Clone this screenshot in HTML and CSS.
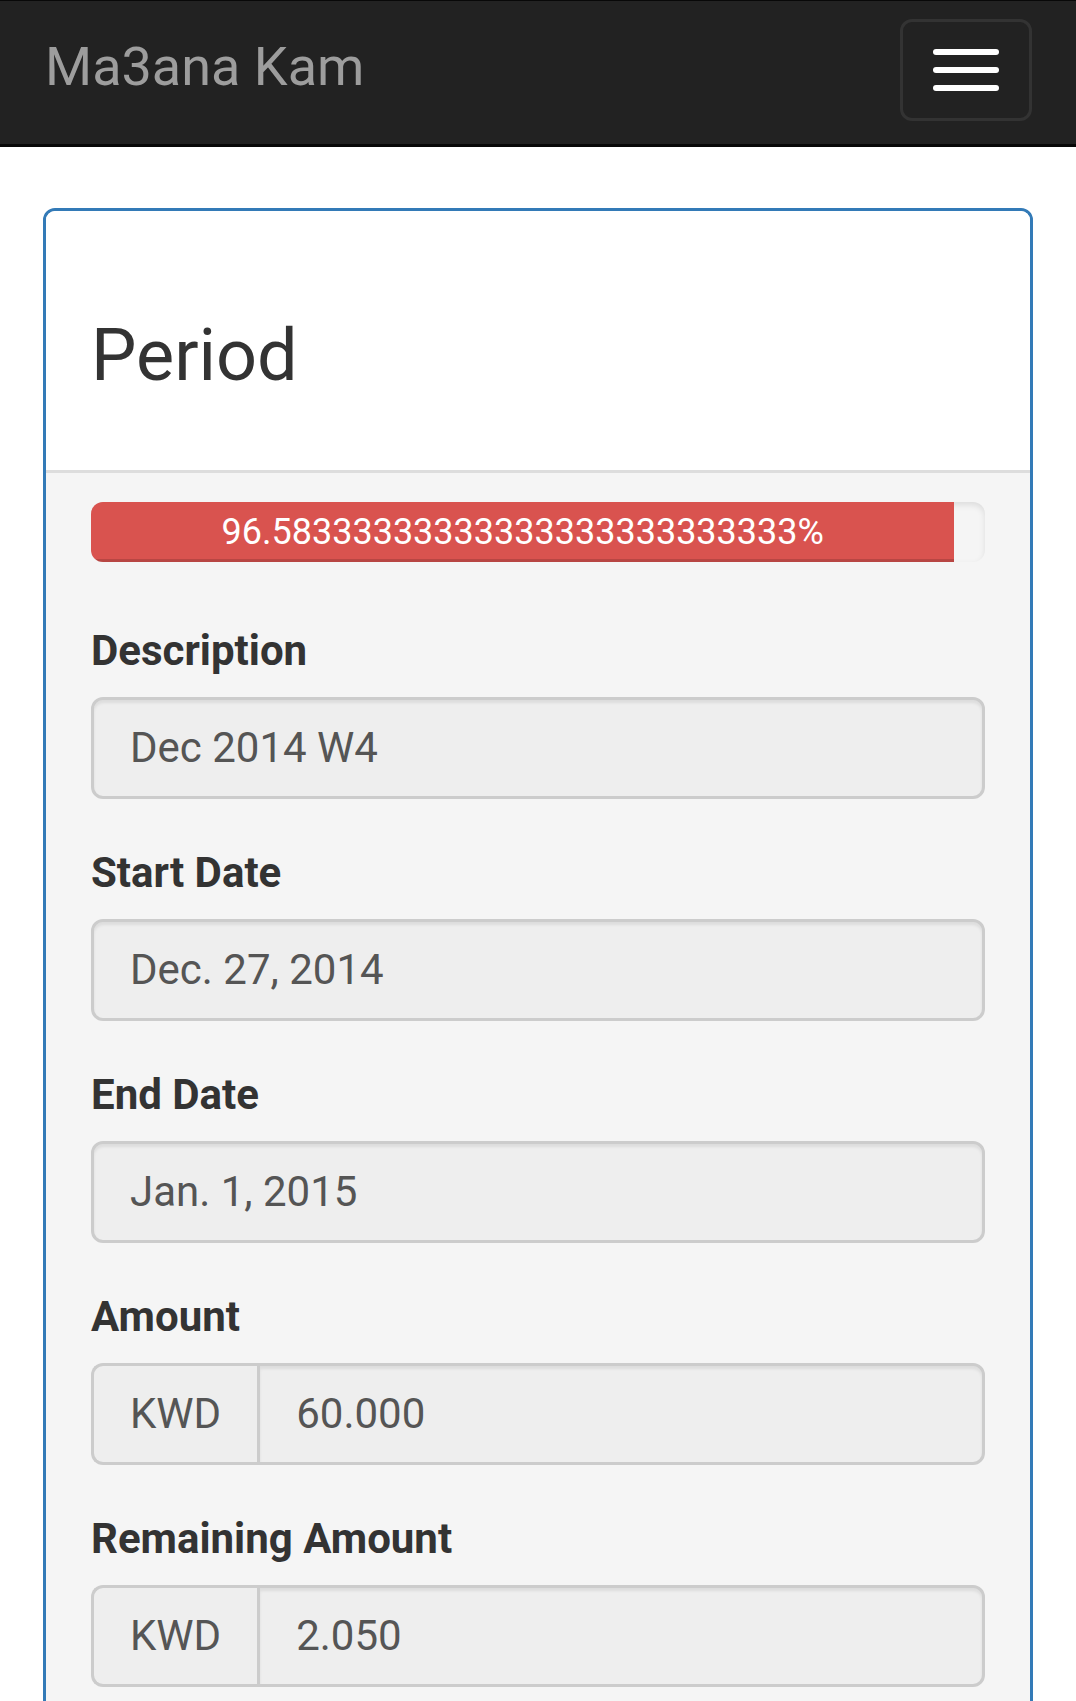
FILE: index.html
```html
<!DOCTYPE html>
<html lang="en">
<head>
<meta charset="utf-8">
<title>Ma3ana Kam</title>
<link rel="stylesheet" href="styles.css">
</head>
<body>
<nav class="navbar">
  <a class="brand" href="#">Ma3ana Kam</a>
  <button class="toggle" type="button" aria-label="Toggle navigation">
    <span class="bar"></span>
    <span class="bar"></span>
    <span class="bar"></span>
  </button>
</nav>
<main class="container">
  <section class="panel">
    <div class="panel-heading">
      <h3 class="panel-title">Period</h3>
    </div>
    <div class="panel-body">
      <div class="progress">
        <div class="progress-bar" style="width: 96.58333333333333%;">96.58333333333333333333333333%</div>
      </div>
      <div class="form-group">
        <label class="label">Description</label>
        <div class="form-control">Dec 2014 W4</div>
      </div>
      <div class="form-group">
        <label class="label">Start Date</label>
        <div class="form-control">Dec. 27, 2014</div>
      </div>
      <div class="form-group">
        <label class="label">End Date</label>
        <div class="form-control">Jan. 1, 2015</div>
      </div>
      <div class="form-group">
        <label class="label">Amount</label>
        <div class="input-group">
          <span class="addon">KWD</span>
          <div class="form-control grouped">60.000</div>
        </div>
      </div>
      <div class="form-group">
        <label class="label">Remaining Amount</label>
        <div class="input-group">
          <span class="addon">KWD</span>
          <div class="form-control grouped">2.050</div>
        </div>
      </div>
    </div>
  </section>
</main>
</body>
</html>
```
FILE: styles.css
```css
* { box-sizing: border-box; }

body {
  margin: 0;
  font-family: Roboto, "Noto Sans", "Liberation Sans", sans-serif;
  font-size: 42px;
  line-height: 60px;
  color: #333;
  background: #fff;
}

.navbar {
  display: flex;
  justify-content: space-between;
  align-items: flex-start;
  height: 147px;
  background: #222;
  border-top: 1px solid #080808;
  border-bottom: 3px solid #080808;
  margin-bottom: 61px;
}

.brand {
  font-size: 54px;
  line-height: 60px;
  color: #9d9d9d;
  text-decoration: none;
  padding: 36px 0 0 45px;
}

.toggle {
  width: 132px;
  height: 102px;
  margin: 18px 44px 0 0;
  padding: 0;
  background: transparent;
  border: 3px solid #333;
  border-radius: 12px;
  display: flex;
  flex-direction: column;
  align-items: center;
  justify-content: center;
  gap: 12px;
}

.bar {
  display: block;
  width: 66px;
  height: 6px;
  border-radius: 3px;
  background: #fff;
}

.container {
  padding: 0 43px;
}

.panel {
  border: 3px solid #337ab7;
  border-radius: 12px;
  overflow: hidden;
  background: #f5f5f5;
}

.panel-heading {
  background: #fff;
  padding: 45px;
  border-bottom: 3px solid #ddd;
}

.panel-title {
  margin: 60px 0 30px;
  font-size: 72px;
  line-height: 79px;
  font-weight: 400;
  color: #333;
}

.panel-body {
  padding: 29px 45px 30px;
}

.progress {
  height: 60px;
  margin-bottom: 59px;
  background: #f5f5f5;
  border-radius: 12px;
  box-shadow: inset 0 3px 6px rgba(0, 0, 0, 0.1);
  overflow: hidden;
}

.progress-bar {
  height: 100%;
  background: #d9534f;
  color: #fff;
  font-size: 36px;
  line-height: 60px;
  text-align: center;
  white-space: nowrap;
  box-shadow: inset 0 -3px 0 rgba(0, 0, 0, 0.15);
}

.form-group {
  margin-bottom: 44px;
}

.label {
  display: block;
  font-weight: 700;
  margin-bottom: 16px;
  color: #333;
}

.form-control {
  height: 102px;
  padding: 18px 36px;
  border: 3px solid #ccc;
  border-radius: 12px;
  background: #eee;
  color: #555;
  font-size: 42px;
  line-height: 60px;
  box-shadow: inset 0 3px 3px rgba(0, 0, 0, 0.075);
}

.input-group {
  display: flex;
}

.addon {
  height: 102px;
  padding: 18px 36px;
  border: 3px solid #ccc;
  border-right: 0;
  border-radius: 12px 0 0 12px;
  background: #eee;
  color: #555;
  font-size: 42px;
  line-height: 60px;
}

.form-control.grouped {
  flex: 1;
  border-radius: 0 12px 12px 0;
}
```
